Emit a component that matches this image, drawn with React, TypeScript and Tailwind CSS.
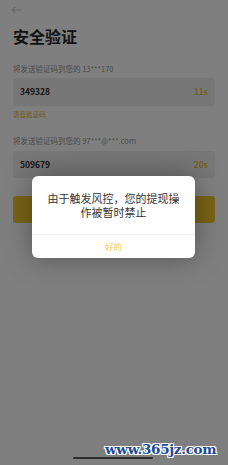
import React from "react";

export default function App() {
  const font = { fontFamily: '"Noto Sans CJK SC", "Noto Sans", sans-serif' };
  return (
    <div className="relative w-[228px] h-[465px] overflow-hidden bg-white" style={font}>
      <div className="flex flex-col px-[13px]">
        <div className="h-[19px] flex items-center">
          <svg width="11" height="8" viewBox="0 0 11 8" className="ml-[-2px]">
            <path d="M10.5 4H1M4.2 0.8L1 4l3.2 3.2" fill="none" stroke="#cfcfcf" strokeWidth="1.1" />
          </svg>
        </div>
        <div className="mt-[7px] h-[20px] flex items-center text-[16px] font-bold text-[#262626] leading-none">安全验证</div>
        <div className="mt-[19px] text-[7.5px] leading-none text-[#959595]">将发送验证码到您的 13***170</div>
        <div className="mt-[5px] h-[28px] bg-[#efefef] rounded-[2px] flex items-center justify-between px-[7px]">
          <span className="text-[8.5px] font-bold text-[#2a2a2a]">349328</span>
          <span className="text-[8.5px] font-bold text-[#e6c240]">11s</span>
        </div>
        <div className="mt-[5px] text-[6.5px] leading-none text-[#e6c040] font-medium">语音验证码</div>
        <div className="mt-[20px] text-[7.5px] leading-none text-[#959595]">将发送验证码到您的 97***@***.com</div>
        <div className="mt-[6px] h-[27px] bg-[#efefef] rounded-[2px] flex items-center justify-between px-[7px]">
          <span className="text-[8.5px] font-bold text-[#2a2a2a]">509679</span>
          <span className="text-[8.5px] font-bold text-[#e6c240]">20s</span>
        </div>
        <div className="mt-[18px] h-[27px] bg-[#f2c62a] rounded-[3px]" />
      </div>

      <div className="absolute inset-0 bg-black/50" />

      <div className="absolute left-[32px] top-[176px] w-[163px] h-[82px] bg-white rounded-[6px] shadow-[0_0_28px_rgba(0,0,0,0.35)] flex flex-col">
        <div className="h-[58px] flex items-center justify-center text-center px-[14px] text-[11px] leading-[14.5px] text-[#333]">
          由于触发风控，您的提现操作被暂时禁止
        </div>
        <div className="h-px bg-[#f0f0f0]" />
        <div className="flex-1 flex items-center justify-center text-[8.5px] text-[#f2c94c]">好的</div>
      </div>

      <div className="absolute left-[73px] top-[457px] w-[80px] h-[2px] rounded-full bg-[#2e2e2e]" />
      <div
        className="absolute left-[105px] top-[443px] text-[13.5px] font-bold leading-none text-[#1b4a94]"
        style={{
          fontFamily: '"DejaVu Serif", serif',
          letterSpacing: "-0.3px",
          textShadow:
            "1px 0 0 #fff,-1px 0 0 #fff,0 1px 0 #fff,0 -1px 0 #fff,1px 1px 0 #fff,-1px -1px 0 #fff,1px -1px 0 #fff,-1px 1px 0 #fff",
        }}
      >
        www.365jz.com
      </div>
    </div>
  );
}
